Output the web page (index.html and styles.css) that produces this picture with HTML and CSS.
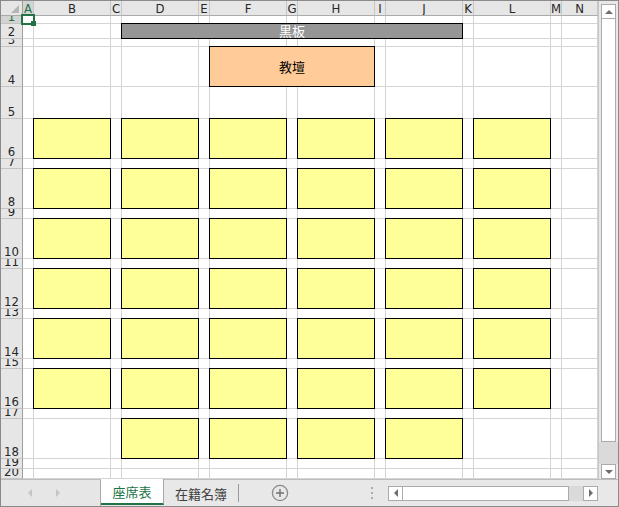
FILE: index.html
```html
<!DOCTYPE html>
<html lang="ja">
<head>
<meta charset="utf-8">
<title>座席表</title>
<link rel="stylesheet" href="styles.css">
</head>
<body>
<div class="window">
  <div class="main">
    <div class="sheet-wrap">
      <div class="sheet">
        <div class="corner"><svg width="21" height="14" viewBox="0 0 21 14"><polygon points="18,4 18,12 10,12" fill="#b5b5b5"/></svg></div>
        <div class="ch chsel">A</div><div class="ch">B</div><div class="ch">C</div><div class="ch">D</div><div class="ch">E</div><div class="ch">F</div><div class="ch">G</div><div class="ch">H</div><div class="ch">I</div><div class="ch">J</div><div class="ch">K</div><div class="ch">L</div><div class="ch">M</div><div class="ch">N</div>

        <div class="rh rhsel">1</div><span></span><span></span><span></span><span></span><span></span><span></span><span></span><span></span><span></span><span></span><span></span><span></span><span></span><span></span>
        <div class="rh">2</div><span></span><span></span><span></span><span></span><span></span><span></span><span></span><span></span><span></span><span></span><span></span><span></span><span></span><span></span>
        <div class="rh">3</div><span></span><span></span><span></span><span></span><span></span><span></span><span></span><span></span><span></span><span></span><span></span><span></span><span></span><span></span>
        <div class="rh">4</div><span></span><span></span><span></span><span></span><span></span><span></span><span></span><span></span><span></span><span></span><span></span><span></span><span></span><span></span>
        <div class="rh">5</div><span></span><span></span><span></span><span></span><span></span><span></span><span></span><span></span><span></span><span></span><span></span><span></span><span></span><span></span>
        <div class="rh">6</div><span></span><span></span><span></span><span></span><span></span><span></span><span></span><span></span><span></span><span></span><span></span><span></span><span></span><span></span>
        <div class="rh">7</div><span></span><span></span><span></span><span></span><span></span><span></span><span></span><span></span><span></span><span></span><span></span><span></span><span></span><span></span>
        <div class="rh">8</div><span></span><span></span><span></span><span></span><span></span><span></span><span></span><span></span><span></span><span></span><span></span><span></span><span></span><span></span>
        <div class="rh">9</div><span></span><span></span><span></span><span></span><span></span><span></span><span></span><span></span><span></span><span></span><span></span><span></span><span></span><span></span>
        <div class="rh">10</div><span></span><span></span><span></span><span></span><span></span><span></span><span></span><span></span><span></span><span></span><span></span><span></span><span></span><span></span>
        <div class="rh">11</div><span></span><span></span><span></span><span></span><span></span><span></span><span></span><span></span><span></span><span></span><span></span><span></span><span></span><span></span>
        <div class="rh">12</div><span></span><span></span><span></span><span></span><span></span><span></span><span></span><span></span><span></span><span></span><span></span><span></span><span></span><span></span>
        <div class="rh">13</div><span></span><span></span><span></span><span></span><span></span><span></span><span></span><span></span><span></span><span></span><span></span><span></span><span></span><span></span>
        <div class="rh">14</div><span></span><span></span><span></span><span></span><span></span><span></span><span></span><span></span><span></span><span></span><span></span><span></span><span></span><span></span>
        <div class="rh">15</div><span></span><span></span><span></span><span></span><span></span><span></span><span></span><span></span><span></span><span></span><span></span><span></span><span></span><span></span>
        <div class="rh">16</div><span></span><span></span><span></span><span></span><span></span><span></span><span></span><span></span><span></span><span></span><span></span><span></span><span></span><span></span>
        <div class="rh">17</div><span></span><span></span><span></span><span></span><span></span><span></span><span></span><span></span><span></span><span></span><span></span><span></span><span></span><span></span>
        <div class="rh">18</div><span></span><span></span><span></span><span></span><span></span><span></span><span></span><span></span><span></span><span></span><span></span><span></span><span></span><span></span>
        <div class="rh">19</div><span></span><span></span><span></span><span></span><span></span><span></span><span></span><span></span><span></span><span></span><span></span><span></span><span></span><span></span>
        <div class="rh">20</div><span></span><span></span><span></span><span></span><span></span><span></span><span></span><span></span><span></span><span></span><span></span><span></span><span></span><span></span>
      </div>

      <div class="shapes">
        <div class="selcell"></div>
        <div class="board">黒板</div>
        <div class="podium">教壇</div>

        <div class="desk c3 r7"></div><div class="desk c5 r7"></div><div class="desk c7 r7"></div><div class="desk c9 r7"></div><div class="desk c11 r7"></div><div class="desk c13 r7"></div>
        <div class="desk c3 r9"></div><div class="desk c5 r9"></div><div class="desk c7 r9"></div><div class="desk c9 r9"></div><div class="desk c11 r9"></div><div class="desk c13 r9"></div>
        <div class="desk c3 r11"></div><div class="desk c5 r11"></div><div class="desk c7 r11"></div><div class="desk c9 r11"></div><div class="desk c11 r11"></div><div class="desk c13 r11"></div>
        <div class="desk c3 r13"></div><div class="desk c5 r13"></div><div class="desk c7 r13"></div><div class="desk c9 r13"></div><div class="desk c11 r13"></div><div class="desk c13 r13"></div>
        <div class="desk c3 r15"></div><div class="desk c5 r15"></div><div class="desk c7 r15"></div><div class="desk c9 r15"></div><div class="desk c11 r15"></div><div class="desk c13 r15"></div>
        <div class="desk c3 r17"></div><div class="desk c5 r17"></div><div class="desk c7 r17"></div><div class="desk c9 r17"></div><div class="desk c11 r17"></div><div class="desk c13 r17"></div>
        <div class="desk c5 r19"></div><div class="desk c7 r19"></div><div class="desk c9 r19"></div><div class="desk c11 r19"></div>
      </div>
    </div>

    <div class="vscroll">
      <div class="sbtn"><i class="tri-up"></i></div>
      <div class="vthumb"></div>
      <div class="vtrack"></div>
      <div class="sbtn"><i class="tri-down"></i></div>
    </div>
  </div>

  <div class="tabbar">
    <div class="nav"><i class="tri-left light"></i><i class="tri-right light"></i></div>
    <div class="tab active">座席表</div>
    <div class="tab">在籍名簿</div>
    <div class="tabsep"></div>
    <div class="addsheet">
      <svg width="18" height="18" viewBox="0 0 18 18"><circle cx="9" cy="9" r="7.6" fill="none" stroke="#8a8a8a" stroke-width="1.3"/><path d="M9 5v8M5 9h8" stroke="#6f6f6f" stroke-width="1.4"/></svg>
    </div>
    <div class="dots"><i></i><i></i><i></i></div>
    <div class="hscroll">
      <div class="hbtn"><i class="tri-left"></i></div>
      <div class="hthumb"></div>
      <div class="htrack"></div>
      <div class="hbtn"><i class="tri-right"></i></div>
    </div>
  </div>
</div>
</body>
</html>
```

FILE: styles.css
```css
* { box-sizing: border-box; margin: 0; padding: 0; }
html, body { width: 619px; height: 507px; overflow: hidden; background: #fff; }
body { font-family: "Liberation Sans Narrow", "DejaVu Sans Condensed", "Liberation Sans", sans-serif; }

.window {
  width: 619px; height: 507px;
  border: 1px solid #8a8a8a;
  display: flex; flex-direction: column;
  background: #e6e6e6;
}
.main { display: flex; height: 478px; }

.sheet-wrap { position: relative; width: 597px; height: 478px; overflow: hidden; background: #fff; }

.sheet, .shapes {
  display: grid;
  grid-template-columns: 22px repeat(6, 11px 77px) 11px 36px;
  grid-template-rows: 15px 8px 15px 8px 40px 32px repeat(7, 40px 10px) 10px;
}

.sheet span { border-right: 1px solid #d4d4d4; border-bottom: 1px solid #d4d4d4; }

.corner { background: #e6e6e6; border-right: 1px solid #9e9e9e; border-bottom: 1px solid #ababab; }
.corner svg { display: block; }

.ch {
  background: #e6e6e6;
  border-right: 1px solid #c6c6c6;
  border-bottom: 1px solid #ababab;
  display: flex; justify-content: center; align-items: flex-end;
  overflow: hidden;
  font-size: 13px; line-height: 12px; color: #262626;
}
.chsel { background: #d3d3d3; color: #217346; border-bottom-color: #217346; }

.rh {
  background: #e6e6e6;
  border-right: 1px solid #9e9e9e;
  border-bottom: 1px solid #c3c3c3;
  display: flex; justify-content: center; align-items: flex-end;
  overflow: hidden;
  font-size: 13px; line-height: 12px; color: #262626;
}
.rhsel { background: #d3d3d3; color: #217346; border-right-color: #217346; }

.shapes { position: absolute; inset: 0; pointer-events: none; }

.selcell {
  grid-column: 2; grid-row: 2;
  border: 2px solid #217346;
  margin: -2px -1px -1px -2px;
  position: relative;
}
.selcell::after {
  content: ""; position: absolute;
  right: -3px; bottom: -3px;
  width: 5px; height: 5px;
  background: #217346;
}

.desk {
  background: #ffff99;
  border: 1px solid #000;
  margin: -1px 0 0 -1px;
}
.c3 { grid-column: 3; } .c5 { grid-column: 5; } .c7 { grid-column: 7; }
.c9 { grid-column: 9; } .c11 { grid-column: 11; } .c13 { grid-column: 13; }
.r7 { grid-row: 7; } .r9 { grid-row: 9; } .r11 { grid-row: 11; } .r13 { grid-row: 13; }
.r15 { grid-row: 15; } .r17 { grid-row: 17; } .r19 { grid-row: 19; }

.board, .podium {
  display: flex; align-items: center; justify-content: center;
  border: 1px solid #000;
  margin: -1px 0 0 -1px;
  font-family: "Noto Sans CJK JP", sans-serif;
  font-size: 13px; line-height: 14px;
}
.board { grid-column: 5 / 12; grid-row: 3; background: #969696; color: #fff; }
.podium { grid-column: 7 / 10; grid-row: 5; background: #ffcc99; color: #000; }

/* vertical scrollbar */
.vscroll {
  width: 20px;
  border-left: 1px solid #c6c6c6;
  background: #e8e8e8;
  padding: 3px 2px 0;
  display: flex; flex-direction: column;
}
.sbtn {
  height: 15px; flex: none;
  background: #fff; border: 1px solid #ababab;
  display: flex; align-items: center; justify-content: center;
}
.vthumb { height: 423px; flex: none; background: #fff; border: 1px solid #ababab; border-top: 0; }
.vtrack { height: 22px; flex: none; background: #dadada; margin: 0 -2px; }

.tri-up, .tri-down, .tri-left, .tri-right { display: block; width: 0; height: 0; border: 0 solid transparent; }
.tri-up { border-width: 0 4px 4px; border-bottom-color: #6e6e6e; }
.tri-down { border-width: 4px 4px 0; border-top-color: #6e6e6e; }
.tri-left { border-width: 4px 4px 4px 0; border-right-color: #6e6e6e; }
.tri-right { border-width: 4px 0 4px 4px; border-left-color: #6e6e6e; }
.tri-left.light { border-right-color: #c4c4c4; }
.tri-right.light { border-left-color: #c4c4c4; }

/* tab bar */
.tabbar {
  display: flex; align-items: center;
  height: 27px;
  border-top: 1px solid #bdbdbd;
  background: #e8e8e8;
  font-family: "Noto Sans CJK JP", sans-serif;
  font-size: 13px;
}
.nav {
  width: 100px; height: 100%;
  border-right: 1px solid #a8a8a8;
  background: #e6e6e6;
  display: flex; align-items: center; justify-content: center; gap: 24px;
  padding-right: 14px;
}
.tab {
  height: 100%;
  display: flex; align-items: center; justify-content: center;
  color: #404040;
  width: 74px;
}
.tab.active {
  width: 63px; height: 26px;
  margin-top: -1px; align-self: flex-start;
  background: #fff;
  color: #217346;
  border-right: 1px solid #a8a8a8;
  border-bottom: 2px solid #217346;
  padding-top: 1px;
}
.tabsep { width: 1px; height: 18px; background: #9a9a9a; }
.addsheet { margin-left: 32px; width: 18px; height: 18px; }
.addsheet svg { display: block; }
.dots { margin-left: 82px; width: 3px; display: flex; flex-direction: column; gap: 3px; }
.dots i { display: block; width: 2px; height: 2px; background: #acacac; }

.hscroll { margin-left: 14px; display: flex; height: 15px; }
.hbtn {
  width: 15px; height: 15px;
  background: #fff; border: 1px solid #ababab;
  display: flex; align-items: center; justify-content: center;
}
.hthumb { width: 166px; background: #fff; border: 1px solid #ababab; border-left: 0; }
.htrack { width: 14px; background: #dadada; }
```
